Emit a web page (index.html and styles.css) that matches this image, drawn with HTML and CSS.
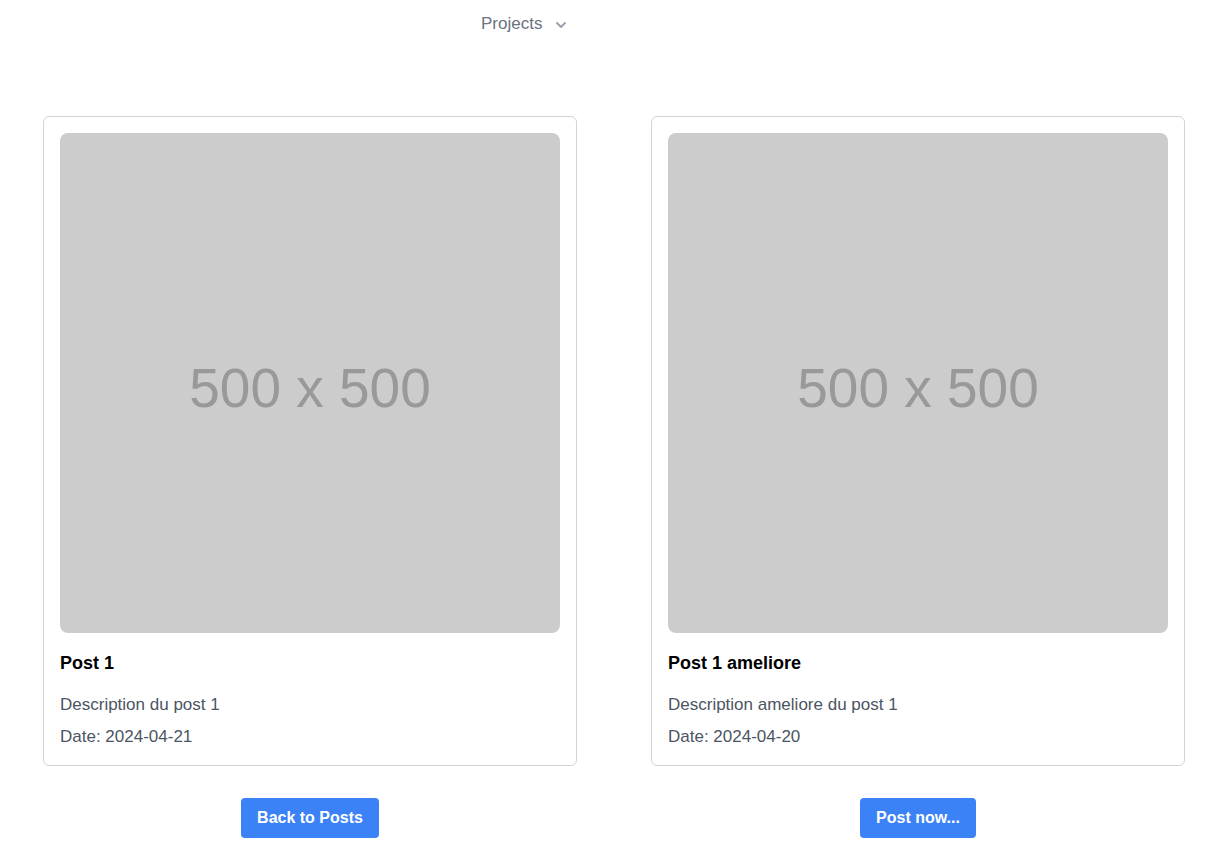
FILE: index.html
```html
<!DOCTYPE html>
<html lang="fr">
<head>
<meta charset="utf-8">
<title>Posts</title>
<link rel="stylesheet" href="styles.css">
</head>
<body>
<header class="topbar">
  <nav class="nav">
    <button class="nav-item">Projects
      <svg class="chev" width="12" height="12" viewBox="0 0 12 12" fill="none" stroke="currentColor" stroke-width="2" stroke-linecap="round" stroke-linejoin="round" aria-hidden="true"><polyline points="2,4 6,8 10,4"/></svg>
    </button>
  </nav>
</header>
<main class="compare">
  <section class="col">
    <article class="card">
      <div class="thumb"><span>500 x 500</span></div>
      <h2 class="title">Post 1</h2>
      <p class="desc">Description du post 1</p>
      <p class="date">Date: 2024-04-21</p>
    </article>
    <button class="btn">Back to Posts</button>
  </section>
  <section class="col">
    <article class="card">
      <div class="thumb"><span>500 x 500</span></div>
      <h2 class="title">Post 1 ameliore</h2>
      <p class="desc">Description ameliore du post 1</p>
      <p class="date">Date: 2024-04-20</p>
    </article>
    <button class="btn">Post now...</button>
  </section>
</main>
</body>
</html>
```

FILE: styles.css
```css
* { box-sizing: border-box; }
body {
  margin: 0;
  font-family: "Liberation Sans", Arial, sans-serif;
  background: #ffffff;
  color: #000;
}
.topbar {
  padding: 12px 0 10px 481px;
}
.nav { display: flex; }
.nav-item {
  display: flex;
  align-items: center;
  gap: 13px;
  background: none;
  border: 0;
  padding: 0;
  font: inherit;
  font-size: 17px;
  line-height: 24px;
  color: #6b7280;
}
.chev { color: #9ca3af; margin-top: 1px; }
.compare {
  margin-top: 70px;
  padding-left: 43px;
  display: grid;
  grid-template-columns: 534px 534px;
  column-gap: 74px;
}
.col {
  display: flex;
  flex-direction: column;
  align-items: center;
}
.card {
  width: 534px;
  border: 1px solid #d1d5db;
  border-radius: 6px;
  padding: 16px;
}
.thumb {
  width: 500px;
  height: 500px;
  background: #cccccc;
  border-radius: 8px;
  display: flex;
  align-items: center;
  justify-content: center;
}
.thumb span {
  font-size: 55px;
  color: #999999;
  margin-top: 10px;
}
.title {
  margin: 16px 0 0;
  font-size: 18px;
  line-height: 28px;
  font-weight: 600;
}
.desc {
  margin: 16px 0 0;
  font-size: 17px;
  line-height: 24px;
  color: #4b5563;
}
.date {
  margin: 8px 0 0;
  font-size: 17px;
  line-height: 24px;
  color: #4b5563;
}
.btn {
  margin-top: 32px;
  background: #3b82f6;
  color: #fff;
  border: 0;
  border-radius: 4px;
  padding: 8px 16px;
  font-family: inherit;
  font-size: 16px;
  line-height: 24px;
  font-weight: 700;
  letter-spacing: 0;
}
```
